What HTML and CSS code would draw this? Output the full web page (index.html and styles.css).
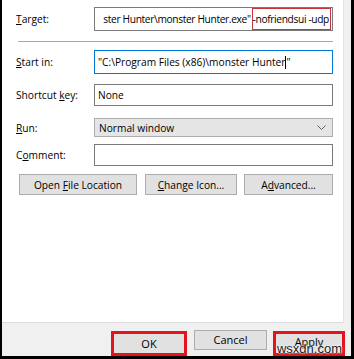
FILE: index.html
```html
<html lang="en">

<head>
  <meta charset="UTF-8">
  <title>Shortcut Properties</title>
  <link rel="stylesheet" href="styles.css">
</head>

<body>
  <div id="frame">
    <div id="main">
      <div id="panel">
        <div class="row row-target">
          <label class="label"><u>T</u>arget:</label>
          <div class="field field-target">
            <span>ster Hunter\monster Hunter.exe"</span><span class="mark">-nofriendsui -udp</span>
          </div>
        </div>
        <div class="separator"></div>
        <div class="row row-start">
          <label class="label"><u>S</u>tart in:</label>
          <div class="field field-focus">"C:\Program Files (x86)\monster Hunter<span class="caret"></span>"</div>
        </div>
        <div class="row row-key">
          <label class="label">Shortcut <u>k</u>ey:</label>
          <div class="field">None</div>
        </div>
        <div class="row row-run">
          <label class="label"><u>R</u>un:</label>
          <div class="select">
            <span>Normal window</span>
            <svg width="9" height="6" viewBox="0 0 9 6"><path d="M0.5 0.5 L4.5 4.5 L8.5 0.5" fill="none" stroke="#606060" stroke-width="1"/></svg>
          </div>
        </div>
        <div class="row row-comment">
          <label class="label">C<u>o</u>mment:</label>
          <div class="field"></div>
        </div>
        <div class="actions">
          <button class="btn btn-open">Open <u>F</u>ile Location</button>
          <button class="btn btn-icon"><u>C</u>hange Icon...</button>
          <button class="btn btn-adv">A<u>d</u>vanced...</button>
        </div>
      </div>
      <div id="strip"></div>
    </div>
    <div id="footer">
      <button class="btn btn-foot marked btn-ok">OK</button>
      <button class="btn btn-foot btn-cancel">Cancel</button>
      <button class="btn btn-foot marked btn-apply">Apply</button>
      <span id="watermark">wsxdn.com</span>
    </div>
  </div>
</body>

</html>
```

FILE: styles.css
```css
body {
  margin: 0;
  font-family: "Open Sans", "Noto Sans", sans-serif;
  font-size: 10.2px;
  color: #000;
}

#frame {
  width: 354px;
  height: 359px;
  box-sizing: border-box;
  border-left: 2px solid #000;
  border-right: 3px solid #000;
  border-bottom: 3px solid #000;
  display: flex;
  flex-direction: column;
  background-color: #f0f0f0;
}

#main {
  display: flex;
  height: 323px;
}

#panel {
  width: 341px;
  background-color: #fff;
  border-bottom: 1px solid #dcdcdc;
  box-sizing: border-box;
  padding: 7px 10px 0 14px;
  display: flex;
  flex-direction: column;
}

#strip {
  flex: 1;
  border-left: 1px solid #e3e3e3;
  background-color: #f0f0f0;
}

.row {
  display: flex;
  align-items: center;
}

.label {
  width: 78px;
  flex-shrink: 0;
}

.field {
  flex: 1;
  height: 22px;
  box-sizing: border-box;
  border: 1px solid #7a7a7a;
  padding: 0 3px;
  display: flex;
  align-items: center;
  white-space: nowrap;
  overflow: hidden;
}

.row-target .field {
  height: 24px;
}

.field-target {
  justify-content: flex-end;
  padding-right: 1px;
  letter-spacing: -0.35px;
}

.mark {
  border: 1px solid #c8323a;
  padding: 3px 1px 3px 0;
  margin-left: 1px;
}

.separator {
  height: 1px;
  background-color: #a8a8a8;
  margin: 10px 0 8px 2px;
}

.row-start .field {
  height: 24px;
}

.field-focus {
  border-color: #0078d7;
}

.caret {
  display: inline-block;
  width: 1px;
  height: 13px;
  background-color: #000;
  vertical-align: middle;
}

.row-key {
  margin-top: 10px;
}

.row-run {
  margin-top: 12px;
}

.select {
  flex: 1;
  height: 19px;
  box-sizing: border-box;
  border: 1px solid #adadad;
  background-color: #e5e5e5;
  padding: 0 6px 0 4px;
  display: flex;
  align-items: center;
  justify-content: space-between;
}

.row-comment {
  margin-top: 7px;
}

.actions {
  display: flex;
  margin-top: 8px;
  padding-left: 3px;
}

.btn {
  font-family: inherit;
  font-size: inherit;
  color: #000;
  height: 21px;
  box-sizing: border-box;
  border: 1px solid #adadad;
  background-color: #e1e1e1;
  padding: 0;
}

.btn-open {
  width: 118px;
}

.btn-icon {
  width: 92px;
  margin-left: 8px;
}

.btn-adv {
  width: 89px;
  margin-left: 7px;
}

#footer {
  flex: 1;
  position: relative;
  display: flex;
  align-items: center;
  justify-content: flex-end;
  padding-right: 6px;
}

.btn-foot {
  height: 20px;
  font-size: 11px;
}

.marked {
  height: 25px;
  border: 3px solid #e4141f;
  margin-top: 8px;
}

.btn-ok {
  width: 76px;
}

.btn-cancel {
  width: 73px;
  margin: 0 6px 0 7px;
}

.btn-apply {
  width: 72px;
  padding-bottom: 6px;
}

#watermark {
  position: absolute;
  right: 9px;
  bottom: 0;
  font-family: "Liberation Sans", sans-serif;
  font-size: 13px;
  line-height: 14px;
  color: #1a1a1a;
  text-shadow: 0 0 2px #fff, 0 0 2px #fff;
}
```
